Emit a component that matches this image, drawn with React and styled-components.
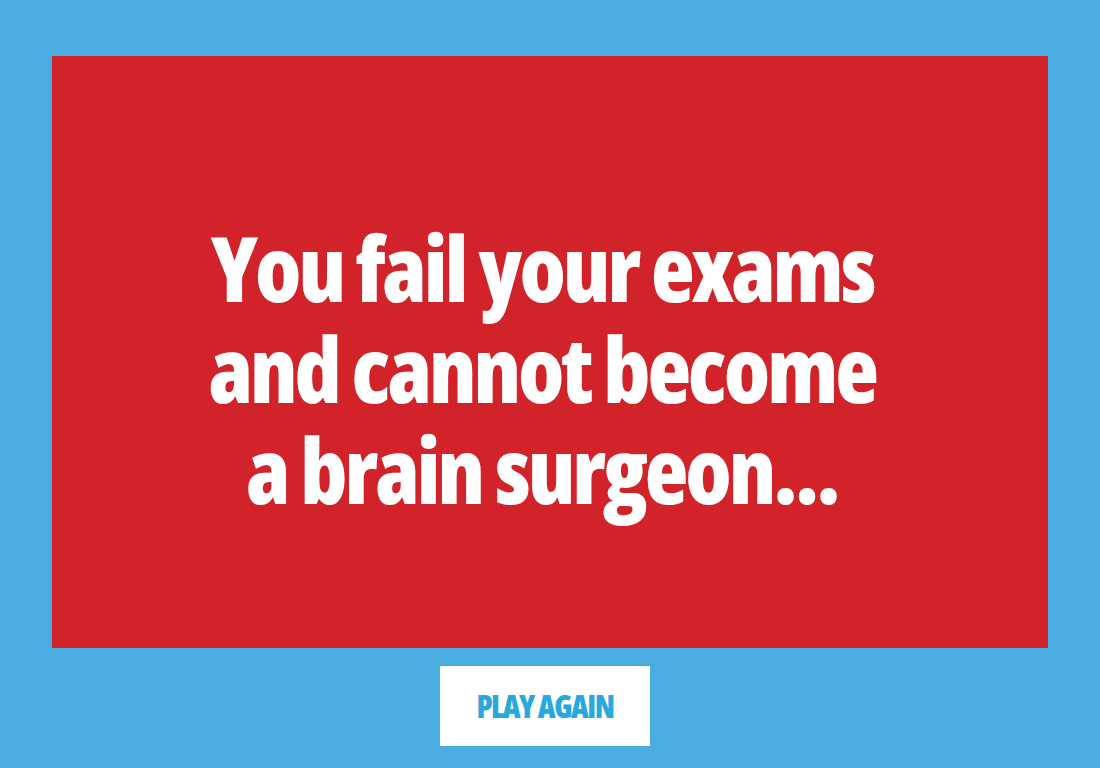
import React from "react";
import styled, { createGlobalStyle } from "styled-components";

const Global = createGlobalStyle`
  html, body {
    margin: 0;
    background: #4aade1;
  }
`;

const Page = styled.div`
  width: 1100px;
  height: 768px;
  box-sizing: border-box;
  padding: 56px 52px 0;
  display: flex;
  flex-direction: column;
  align-items: center;
  background: #4aade1;
  font-family: "Open Sans", "Liberation Sans", sans-serif;
  font-stretch: 75%;
`;

const Panel = styled.div`
  align-self: stretch;
  height: 592px;
  box-sizing: border-box;
  padding: 32px 16px 0 0;
  display: flex;
  align-items: center;
  justify-content: center;
  background: #d2232a;
`;

const Message = styled.h1`
  margin: 0;
  color: #fff;
  font-size: 90px;
  font-weight: 800;
  line-height: 101px;
  letter-spacing: -3px;
  text-align: center;
`;

const Line = styled.span`
  display: block;
  white-space: nowrap;
`;

const Button = styled.button`
  margin: 18px 10px 0 0;
  width: 210px;
  height: 80px;
  padding: 0;
  border: none;
  background: #fff;
  color: #27a8e0;
  font-family: inherit;
  font-stretch: 75%;
  font-size: 31px;
  font-weight: 800;
  letter-spacing: -1.5px;
  cursor: pointer;
`;

export default function App() {
  return (
    <>
      <Global />
      <Page>
        <Panel>
          <Message>
            <Line>You fail your exams</Line>
            <Line>and cannot become</Line>
            <Line>a brain surgeon...</Line>
          </Message>
        </Panel>
        <Button>PLAY AGAIN</Button>
      </Page>
    </>
  );
}
